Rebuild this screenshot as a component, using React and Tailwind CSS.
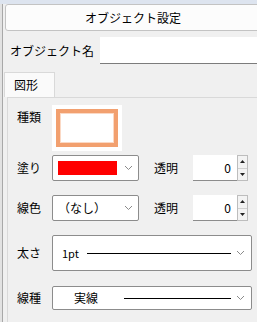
import React from "react";

const font = { fontFamily: '"Noto Sans CJK JP", "Noto Sans", sans-serif' };

function Chevron() {
  return (
    <svg width="9" height="6" viewBox="0 0 9 6" className="shrink-0">
      <polyline points="1,1 4.5,4.5 8,1" fill="none" stroke="#8a8a8a" strokeWidth="1" />
    </svg>
  );
}

function Spin() {
  return (
    <div className="flex h-[26px] ml-[9px]">
      <div className="w-[44px] bg-white border-b border-[#8c8c8c] flex items-center justify-end pr-[6px] text-[12px] text-black">
        0
      </div>
      <div className="w-[11px] flex flex-col border border-[#bdbdbd] bg-[#f3f3f3]">
        <div className="flex-1 flex items-center justify-center border-b border-[#d0d0d0]">
          <svg width="5" height="3" viewBox="0 0 5 3">
            <polygon points="0,3 2.5,0 5,3" fill="#222" />
          </svg>
        </div>
        <div className="flex-1 flex items-center justify-center">
          <svg width="5" height="3" viewBox="0 0 5 3">
            <polygon points="0,0 2.5,3 5,0" fill="#222" />
          </svg>
        </div>
      </div>
    </div>
  );
}

function Label({ children }) {
  return <div className="w-[35px] text-[12px] text-black leading-none">{children}</div>;
}

export default function App() {
  return (
    <div style={font} className="w-[257px] h-[322px] overflow-hidden bg-[#f0f0f0] flex flex-col">
      <div className="h-[4px] bg-[#dde4ef] shrink-0" />
      <div className="flex-1 flex">
        <div className="w-[2px] bg-[#e2e2e2]" />
        <div className="w-[1px] bg-[#a8a8a8]" />
        <div className="flex-1 flex flex-col pl-[1px]">
          <div className="h-[27px] -mr-[4px] ml-[1px] rounded-[3px] border border-[#c3c3c3] bg-[#fcfcfc] flex items-center justify-center text-[12px] text-black">
            オブジェクト設定
          </div>

          <div className="mt-[6px] h-[27px] flex items-center">
            <div className="w-[96px] pl-[6px] text-[12px] text-black">オブジェクト名</div>
            <div className="flex-1 h-full bg-white border-b border-[#7c7c7c]" />
          </div>

          <div className="mt-[8px] w-[51px] h-[25px] bg-[#fafafa] border border-b-0 border-[#d9d9d9] flex items-center pl-[9px] text-[12px] text-black">
            図形
          </div>

          <div className="flex-1 ml-[3px] border-l border-t border-[#d9d9d9] bg-[#f0f0f0] pl-[9px] flex flex-col">
            <div className="mt-[7px] flex">
              <div className="pt-[6px]">
                <Label>種類</Label>
              </div>
              <div className="w-[70px] h-[46px] bg-white p-[4px]">
                <div className="w-full h-full border-[4px] border-[#f2a06f] shadow-[inset_0_0_0_1px_#fbd9c5]" />
              </div>
            </div>

            <div className="mt-[4px] flex items-center">
              <Label>塗り</Label>
              <div className="w-[87px] h-[26px] bg-white border border-[#8c8c8c] rounded-[2px] flex items-center pl-[5px] pr-[5px]">
                <div className="w-[59px] h-[14px] bg-[#ff0000]" />
                <div className="flex-1" />
                <Chevron />
              </div>
              <div className="ml-[15px] w-[30px] text-[12px] text-black">透明</div>
              <Spin />
            </div>

            <div className="mt-[14px] flex items-center">
              <Label>線色</Label>
              <div className="w-[87px] h-[26px] bg-white border border-[#8c8c8c] rounded-[2px] flex items-center pl-[5px] pr-[5px]">
                <div className="text-[12px] text-black">（なし）</div>
                <div className="flex-1" />
                <Chevron />
              </div>
              <div className="ml-[15px] w-[30px] text-[12px] text-black">透明</div>
              <Spin />
            </div>

            <div className="mt-[14px] flex items-center">
              <Label>太さ</Label>
              <div className="w-[200px] h-[36px] bg-white border border-[#8c8c8c] rounded-[2px] flex items-center pl-[9px] pr-[6px]">
                <div className="text-[11px] text-black w-[25px]">1pt</div>
                <div className="w-[144px] h-[1px] bg-black" />
                <div className="flex-1" />
                <Chevron />
              </div>
            </div>

            <div className="mt-[15px] flex items-center">
              <Label>線種</Label>
              <div className="w-[200px] h-[24px] bg-white border border-[#8c8c8c] rounded-[2px] flex items-center pl-[21px] pr-[6px]">
                <div className="text-[12px] text-black w-[50px]">実線</div>
                <div className="w-[107px] h-[1px] bg-black" />
                <div className="flex-1" />
                <Chevron />
              </div>
            </div>
          </div>
        </div>
      </div>
    </div>
  );
}
